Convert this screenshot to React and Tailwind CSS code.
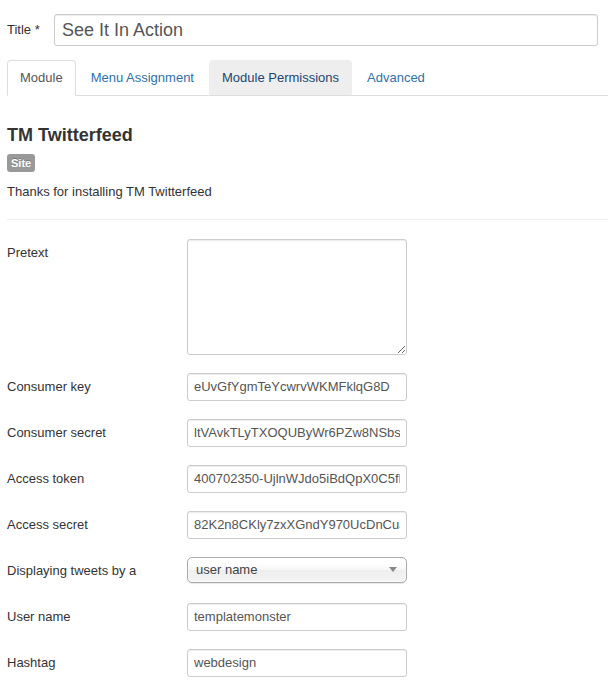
import { useState } from 'react';

const fields = [
  { label: 'Consumer key', value: 'eUvGfYgmTeYcwrvWKMFklqG8D' },
  { label: 'Consumer secret', value: 'ltVAvkTLyTXOQUByWr6PZw8NSbs9tXk2LmQ' },
  { label: 'Access token', value: '400702350-UjlnWJdo5iBdQpX0C5fLt8aHkq' },
  { label: 'Access secret', value: '82K2n8CKly7zxXGndY970UcDnCuJp4Wq' },
];

const tabs = ['Module', 'Menu Assignment', 'Module Permissions', 'Advanced'];

function Row({ label, children, last }) {
  return (
    <div className={last ? 'flex mb-[20px]' : 'flex mb-[18px]'}>
      <label className="w-[180px] shrink-0 pt-[5px] leading-[18px] text-[13px] text-[#333]">{label}</label>
      {children}
    </div>
  );
}

function TextInput({ value }) {
  return (
    <input
      readOnly
      value={value}
      className="w-[220px] h-[28px] px-[6px] py-[4px] text-[13px] leading-[18px] text-[#555] bg-white border border-[#ccc] rounded-[3px] shadow-[inset_0_1px_1px_rgba(0,0,0,0.075)] outline-none"
    />
  );
}

export default function App() {
  const [activo, setActivo] = useState('Module');

  return (
    <div className="bg-white min-h-[692px] pl-[7px] pt-[14px] font-['Liberation_Sans',Arial,sans-serif] text-[13px] text-[#333]">
      <div className="flex items-center">
        <label className="w-[47px] shrink-0 text-[13px] text-[#333]">Title *</label>
        <input
          readOnly
          value="See It In Action"
          className="w-[544px] h-[32px] px-[7px] text-[18px] leading-[22px] text-[#555] border border-[#ccc] rounded-[3px] shadow-[inset_0_1px_1px_rgba(0,0,0,0.075)] outline-none"
        />
      </div>

      <ul className="flex mt-[14px] border-b border-[#ddd]">
        {tabs.map(t => {
          const esActivo = t === activo;
          const hover = t === 'Module Permissions';
          return (
            <li key={t} className="mr-[2px] -mb-px">
              <button
                onClick={() => setActivo(t)}
                className={
                  esActivo
                    ? 'block px-[12px] py-[8px] leading-[18px] text-[13px] text-[#555] bg-white border border-[#ddd] border-b-transparent rounded-t-[4px]'
                    : hover
                    ? 'block px-[12px] py-[8px] leading-[18px] text-[13px] text-[#22476f] bg-[#eee] border border-[#eee] border-b-[#ddd] rounded-t-[4px]'
                    : 'block px-[12px] py-[8px] leading-[18px] text-[13px] text-[#3071a9] border border-transparent rounded-t-[4px]'
                }
              >
                {t}
              </button>
            </li>
          );
        })}
      </ul>

      <h3 className="mt-[27px] text-[18px] leading-[24px] font-bold text-[#333]">TM Twitterfeed</h3>
      <span className="inline-block mt-[7px] px-[4px] py-[2px] text-[11px] leading-[14px] font-bold text-white bg-[#999] rounded-[3px] [text-shadow:0_-1px_0_rgba(0,0,0,0.25)]">Site</span>
      <p className="mt-[10px] leading-[18px] text-[13px] text-[#333]">Thanks for installing TM Twitterfeed</p>
      <hr className="mt-[18px] mb-[19px] border-t border-[#eee]" />

      <Row label="Pretext">
        <textarea className="w-[220px] h-[116px] px-[6px] py-[4px] text-[13px] text-[#555] border border-[#ccc] rounded-[3px] shadow-[inset_0_1px_1px_rgba(0,0,0,0.075)] outline-none" />
      </Row>

      {fields.map(f => (
        <Row key={f.label} label={f.label}>
          <TextInput value={f.value} />
        </Row>
      ))}

      <Row label="Displaying tweets by a" last>
        <div className="w-[220px] h-[26px] flex items-center justify-between pl-[8px] pr-[9px] text-[13px] text-[#444] border border-[#aaa] rounded-[5px] bg-[linear-gradient(#fff_20%,#f6f6f6_50%,#eee_52%,#f4f4f4)] shadow-[0_0_3px_#fff_inset,0_1px_1px_rgba(0,0,0,0.1)]">
          <span>user name</span>
          <svg width="8" height="5" viewBox="0 0 8 5">
            <path d="M0 0 L8 0 L4 5 Z" fill="#888" />
          </svg>
        </div>
      </Row>

      <Row label="User name">
        <TextInput value="templatemonster" />
      </Row>

      <Row label="Hashtag">
        <TextInput value="webdesign" />
      </Row>
    </div>
  );
}
